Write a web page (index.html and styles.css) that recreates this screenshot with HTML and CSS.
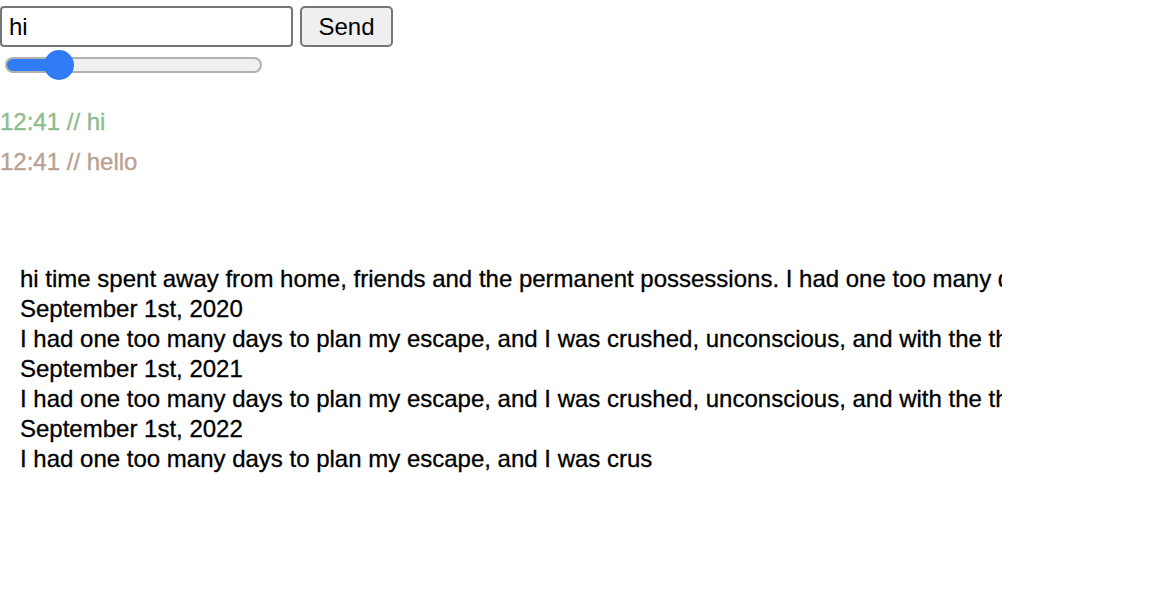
FILE: index.html
```html
<!DOCTYPE html>
<html lang="en">
<head>
    <meta charset="UTF-8">
    <meta name="viewport" content="width=device-width, initial-scale=1.0">
    <title>Chat</title>
    <link rel="stylesheet" href="styles.css">
</head>
<body>
    <form class="composer" id="chatForm">
        <input type="text" id="message" class="message-input" value="hi">
        <button type="submit" class="send-button">Send</button>
    </form>
    <div class="speed">
        <input type="range" id="speed" class="speed-range" min="0" max="100" step="any" value="16.5">
    </div>

    <div class="messages">
        <div class="msg msg-me">12:41 // hi</div>
        <div class="msg msg-them">12:41 // hello</div>
    </div>

    <div class="story">
        <div>hi time spent away from home, friends and the permanent possessions. I had one too many days to plan my escape, and I was crushed.</div>
        <div>September 1st, 2020</div>
        <div>I had one too many days to plan my escape, and I was crushed, unconscious, and with the thought of leaving everything behind.</div>
        <div>September 1st, 2021</div>
        <div>I had one too many days to plan my escape, and I was crushed, unconscious, and with the thought of leaving everything behind.</div>
        <div>September 1st, 2022</div>
        <div>I had one too many days to plan my escape, and I was crus</div>
    </div>
</body>
</html>
```

FILE: styles.css
```css
body {
    margin: 0;
    font-family: "Liberation Sans", Arial, sans-serif;
    font-size: 24px;
    color: #000;
    background: #fff;
}
.composer {
    display: flex;
    gap: 7px;
    padding-top: 6px;
    margin: 0;
}
.message-input {
    box-sizing: border-box;
    width: 293px;
    height: 41px;
    padding: 0 7px;
    font-family: inherit;
    font-size: 24px;
    border: 2px solid #767676;
    border-radius: 4px;
    outline: none;
}
.send-button {
    box-sizing: border-box;
    width: 93px;
    height: 41px;
    padding: 0;
    font-family: inherit;
    font-size: 24px;
    color: #000;
    background-color: #efefef;
    border: 2px solid #767676;
    border-radius: 5px;
}
.speed {
    display: flex;
    padding-left: 5px;
    height: 35px;
    align-items: center;
}
.speed-range {
    -webkit-appearance: none;
    appearance: none;
    width: 257px;
    height: 32px;
    margin: 0;
    background: transparent;
}
.speed-range::-webkit-slider-runnable-track {
    box-sizing: border-box;
    height: 16px;
    border: 2px solid #b1b1b1;
    border-radius: 8px;
    background: linear-gradient(to right, #2f7cf6 0, #2f7cf6 54px, #efefef 54px);
}
.speed-range::-webkit-slider-thumb {
    -webkit-appearance: none;
    width: 30px;
    height: 30px;
    margin-top: -9px;
    border-radius: 50%;
    background: #2f7cf6;
    border: none;
}
.messages {
    padding-top: 20px;
    -webkit-text-stroke: 0.4px;
}
.msg {
    line-height: 40px;
}
.msg-me {
    color: #8fbc8f;
}
.msg-them {
    color: #b9a292;
}
.story {
    width: 982px;
    margin: 82px 0 0 20px;
    line-height: 30px;
    white-space: nowrap;
    overflow: hidden;
    -webkit-text-stroke: 0.3px;
}
```
